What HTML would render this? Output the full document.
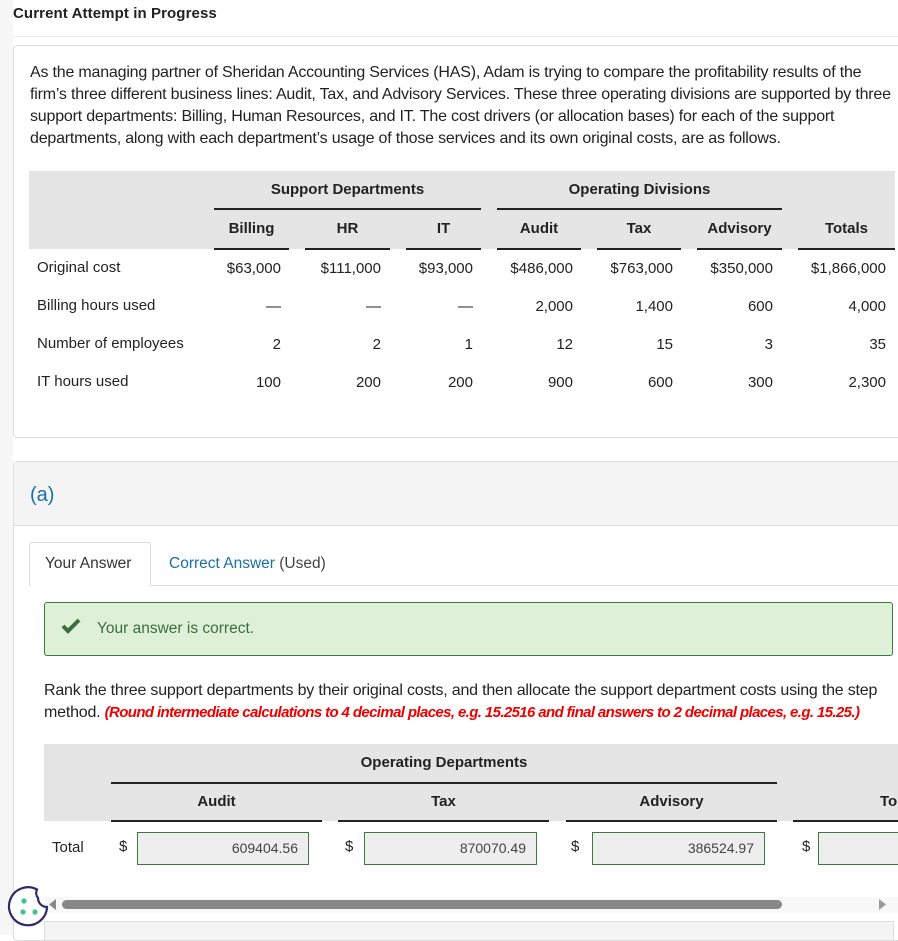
<!DOCTYPE html>
<html><head><style>
*{box-sizing:border-box;margin:0;padding:0}
body{width:898px;height:935px;overflow:hidden;background:#fff;font-family:"Liberation Sans",sans-serif;color:#222;position:relative;font-size:15px}
.abs{position:absolute;white-space:nowrap}
.strip{position:absolute;left:0;top:0;width:13px;height:935px;background:#f7f7f7}
.r{text-align:right}
.c{text-align:center}
.b{font-weight:bold}
.ul{position:absolute;height:2px;background:#222}
.inp{position:absolute;top:832px;height:33px;background:#eee;border:1px solid #3c7a3c;font-size:14px;color:#444;text-align:right;padding-right:10px;line-height:31px}
</style></head><body>
<div class="strip"></div>
<div class="abs b" style="left:13px;top:5px;font-size:15px;letter-spacing:0.1px">Current Attempt in Progress</div>
<div style="position:absolute;left:13px;top:36px;width:885px;height:1px;background:#e8e8e8"></div>
<div style="position:absolute;left:13px;top:45px;width:900px;height:393px;border:1px solid #ddd;border-radius:4px"></div>
<div class="abs" style="left:30px;top:62px;line-height:22px;font-size:16px;letter-spacing:-0.2px">As the managing partner of Sheridan Accounting Services (HAS), Adam is trying to compare the profitability results of the<br>firm’s three different business lines: Audit, Tax, and Advisory Services. These three operating divisions are supported by three<br>support departments: Billing, Human Resources, and IT. The cost drivers (or allocation bases) for each of the support<br>departments, along with each department’s usage of those services and its own original costs, are as follows.</div>

<div style="position:absolute;left:29px;top:171px;width:866px;height:78px;background:#e5e5e5"></div>
<div class="ul" style="left:214px;width:267px;top:208px"></div>
<div class="ul" style="left:497px;width:285px;top:208px"></div>
<div class="ul" style="left:214px;width:75px;top:248px"></div>
<div class="ul" style="left:305px;width:85px;top:248px"></div>
<div class="ul" style="left:406px;width:75px;top:248px"></div>
<div class="ul" style="left:497px;width:84px;top:248px"></div>
<div class="ul" style="left:597px;width:84px;top:248px"></div>
<div class="ul" style="left:697px;width:85px;top:248px"></div>
<div class="ul" style="left:798px;width:97px;top:248px"></div>
<div class="abs b c" style="left:214px;width:267px;top:181px">Support Departments</div>
<div class="abs b c" style="left:497px;width:285px;top:181px">Operating Divisions</div>
<div class="abs b c" style="left:214px;width:75px;top:220px">Billing</div>
<div class="abs b c" style="left:305px;width:85px;top:220px">HR</div>
<div class="abs b c" style="left:406px;width:75px;top:220px">IT</div>
<div class="abs b c" style="left:497px;width:84px;top:220px">Audit</div>
<div class="abs b c" style="left:597px;width:84px;top:220px">Tax</div>
<div class="abs b c" style="left:697px;width:85px;top:220px">Advisory</div>
<div class="abs b c" style="left:798px;width:97px;top:220px">Totals</div>

<div class="abs" style="left:37px;top:259px">Original cost</div>
<div class="abs" style="left:37px;top:297px">Billing hours used</div>
<div class="abs" style="left:37px;top:335px">Number of employees</div>
<div class="abs" style="left:37px;top:373px">IT hours used</div>

<div class="abs r" style="right:617px;top:259px;line-height:19px">$63,000<br><br>—<br><br>2<br><br>100</div>
<div class="abs r" style="right:517px;top:259px;line-height:19px">$111,000<br><br>—<br><br>2<br><br>200</div>
<div class="abs r" style="right:425px;top:259px;line-height:19px">$93,000<br><br>—<br><br>1<br><br>200</div>
<div class="abs r" style="right:325px;top:259px;line-height:19px">$486,000<br><br>2,000<br><br>12<br><br>900</div>
<div class="abs r" style="right:225px;top:259px;line-height:19px">$763,000<br><br>1,400<br><br>15<br><br>600</div>
<div class="abs r" style="right:125px;top:259px;line-height:19px">$350,000<br><br>600<br><br>3<br><br>300</div>
<div class="abs r" style="right:12px;top:259px;line-height:19px">$1,866,000<br><br>4,000<br><br>35<br><br>2,300</div>

<div style="position:absolute;left:13px;top:461px;width:900px;height:480px;border:1px solid #ddd;border-radius:4px"></div>
<div style="position:absolute;left:14px;top:462px;width:890px;height:64px;background:#f4f4f4;border-bottom:1px solid #ddd"></div>
<div class="abs" style="left:30px;top:484px;font-size:20px;color:#1a6fa8">(a)</div>
<div style="position:absolute;left:29px;top:585px;width:870px;height:1px;background:#ddd"></div>
<div style="position:absolute;left:29px;top:542px;width:122px;height:44px;border:1px solid #ddd;border-bottom:none;background:#fff;border-radius:3px 3px 0 0"></div>
<div class="abs" style="left:45px;top:555px;color:#333;font-size:15.5px">Your Answer</div>
<div class="abs" style="left:169px;top:555px;color:#1a6fa8;font-size:15.5px">Correct Answer <span style="color:#444">(Used)</span></div>

<div style="position:absolute;left:44px;top:602px;width:849px;height:54px;background:#dff0d8;border:1px solid #3c7a3c;border-radius:3px"></div>
<svg style="position:absolute;left:61px;top:618px" width="20" height="16" viewBox="0 0 20 16"><path d="M2 8 L7 13 L18 2" stroke="#3c6e3c" stroke-width="4" fill="none"/></svg>
<div class="abs" style="left:97px;top:620px;color:#3c6e3c;font-size:15.5px">Your answer is correct.</div>

<div class="abs" style="left:44px;top:680px;line-height:22px;font-size:16px;letter-spacing:-0.2px">Rank the three support departments by their original costs, and then allocate the support department costs using the step<br>method. <span style="color:#e00;font-weight:bold;font-style:italic;letter-spacing:-0.62px;font-size:15px">(Round intermediate calculations to 4 decimal places, e.g. 15.2516 and final answers to 2 decimal places, e.g. 15.25.)</span></div>

<div style="position:absolute;left:44px;top:744px;width:854px;height:77px;background:#e5e5e5"></div>
<div class="ul" style="left:111px;width:666px;top:782px"></div>
<div class="ul" style="left:111px;width:211px;top:820px"></div>
<div class="ul" style="left:338px;width:211px;top:820px"></div>
<div class="ul" style="left:566px;width:211px;top:820px"></div>
<div class="ul" style="left:793px;width:105px;top:820px"></div>
<div class="abs b c" style="left:111px;width:666px;top:754px">Operating Departments</div>
<div class="abs b c" style="left:111px;width:211px;top:793px">Audit</div>
<div class="abs b c" style="left:338px;width:211px;top:793px">Tax</div>
<div class="abs b c" style="left:566px;width:211px;top:793px">Advisory</div>
<div class="abs b" style="left:880px;top:793px">To</div>

<div class="abs" style="left:52px;top:839px">Total</div>
<div class="abs" style="left:119px;top:838px">$</div>
<div class="inp" style="left:137px;width:172px">609404.56</div>
<div class="abs" style="left:345px;top:838px">$</div>
<div class="inp" style="left:364px;width:173px">870070.49</div>
<div class="abs" style="left:571px;top:838px">$</div>
<div class="inp" style="left:592px;width:173px">386524.97</div>
<div class="abs" style="left:802px;top:838px">$</div>
<div class="inp" style="left:818px;width:100px"></div>

<div style="position:absolute;left:44px;top:897px;width:854px;height:16px;background:#f8f8f8"></div>
<div style="position:absolute;left:62px;top:900px;width:720px;height:9px;background:#888;border-radius:5px"></div>
<svg style="position:absolute;left:48px;top:899px" width="10" height="11"><path d="M8 0 L1 5.5 L8 11 Z" fill="#888"/></svg>
<svg style="position:absolute;left:878px;top:899px" width="10" height="11"><path d="M1 0 L8 5.5 L1 11 Z" fill="#999"/></svg>
<div style="position:absolute;left:44px;top:921px;width:850px;height:20px;background:#f4f4f4;border:1px solid #ddd"></div>

<svg style="position:absolute;left:7px;top:884px" width="44" height="44" viewBox="0 0 44 44"><path d="M30 5.5 A19 19 0 1 0 40 23 A9 9 0 0 1 31 14 A8 8 0 0 1 30 5.5 Z" fill="#fff" stroke="#2e2a6a" stroke-width="2.2"/><circle cx="17" cy="17" r="2.6" fill="#3ac68a"/><circle cx="16" cy="28" r="2.6" fill="#3ac68a"/><circle cx="28" cy="28" r="2.6" fill="#3ac68a"/></svg>
</body></html>
